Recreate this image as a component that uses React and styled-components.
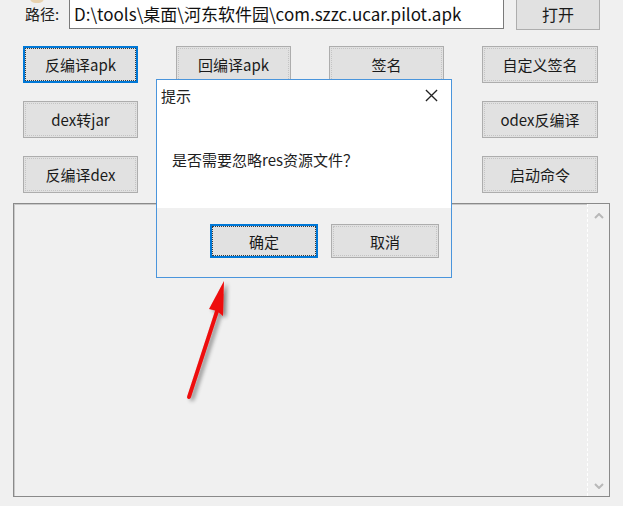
import React from 'react'
import styled, { createGlobalStyle } from 'styled-components'

const GlobalStyle = createGlobalStyle`
    html, body {
        margin: 0;
        padding: 0;
        background: #f0f0f0;
    }
    body {
        font-family: "Noto Sans CJK SC", "Noto Sans", sans-serif;
        color: #1a1a1a;
    }
`

const topButtons = [
    ['反编译apk', '回编译apk', '签名', '自定义签名'],
    ['dex转jar', '', '', 'odex反编译'],
    ['反编译dex', '', '', '启动命令'],
]

const App = () => {
    return (
        <Window>
            <GlobalStyle />
            <PathRow>
                <PathLabel>
                    <TinyIcon />
                    路径:
                </PathLabel>
                <PathInput>D:\tools\桌面\河东软件园\com.szzc.ucar.pilot.apk</PathInput>
                <OpenButton>打开</OpenButton>
            </PathRow>

            <ButtonGrid>
                {topButtons.flat().map((label, i) => (
                    label
                        ? <ToolButton key={i} $focused={i === 0}>{label}</ToolButton>
                        : <span key={i} />
                ))}
            </ButtonGrid>

            <LogBox>
                <ScrollBar>
                    <Chevron viewBox="0 0 10 6"><path d="M1 5 L5 1 L9 5" /></Chevron>
                    <Chevron viewBox="0 0 10 6"><path d="M1 1 L5 5 L9 1" /></Chevron>
                </ScrollBar>
            </LogBox>

            <Dialog>
                <DialogTitle>
                    <span>提示</span>
                    <CloseIcon viewBox="0 0 14 14"><path d="M1 1 L13 13 M13 1 L1 13" /></CloseIcon>
                </DialogTitle>
                <DialogBody>是否需要忽略res资源文件？</DialogBody>
                <DialogFooter>
                    <DialogButton $focused>确定</DialogButton>
                    <DialogButton>取消</DialogButton>
                </DialogFooter>
            </Dialog>

            <Arrow viewBox="0 0 80 140" width="80" height="140">
                <defs>
                    <filter id="arrowShadow" x="-50%" y="-20%" width="200%" height="140%">
                        <feGaussianBlur in="SourceAlpha" stdDeviation="2" />
                        <feOffset dx="3" dy="2" result="blur" />
                        <feComponentTransfer><feFuncA type="linear" slope="0.45" /></feComponentTransfer>
                        <feMerge>
                            <feMergeNode />
                            <feMergeNode in="SourceGraphic" />
                        </feMerge>
                    </filter>
                </defs>
                <g filter="url(#arrowShadow)">
                    <path d="M19 127 L48 38" stroke="#ee0b0b" strokeWidth="4" strokeLinecap="round" fill="none" />
                    <path d="M54 11 L39 39 L47 41 L53 46 Z" fill="#ee0b0b" />
                </g>
            </Arrow>
        </Window>
    )
}

const Window = styled.div`
    position: relative;
    width: 623px;
    height: 506px;
    overflow: hidden;
    background: #f0f0f0;
`

const PathRow = styled.div`
    display: flex;
    align-items: flex-start;
    margin-top: -2px;
    padding-left: 25px;
    height: 31px;
`

const PathLabel = styled.div`
    position: relative;
    width: 44px;
    line-height: 31px;
    font-size: 15px;
    color: #222;
`

const TinyIcon = styled.span`
    position: absolute;
    left: 5px;
    top: 0;
    width: 14px;
    height: 5px;
    border-radius: 0 0 6px 6px;
    background: #e8d2b0;
`

const PathInput = styled.div`
    box-sizing: border-box;
    width: 435px;
    height: 31px;
    padding: 0 4px;
    border: 1px solid #7a7a7a;
    background: #fff;
    font-size: 17px;
    line-height: 29px;
    white-space: nowrap;
    overflow: hidden;
    color: #111;
`

const baseButton = `
    box-sizing: border-box;
    display: flex;
    align-items: center;
    justify-content: center;
    background: #e1e1e1;
    font-family: inherit;
    color: #1a1a1a;
    padding: 0;
`

const OpenButton = styled.div`
    ${baseButton}
    margin-left: 12px;
    width: 84px;
    height: 32px;
    border: 1px solid #adadad;
    font-size: 16px;
`

const ButtonGrid = styled.div`
    display: grid;
    grid-template-columns: 115px 115px 115px 116px;
    grid-auto-rows: 37px;
    column-gap: 38px;
    row-gap: 18px;
    padding: 17px 0 0 23px;
`

const ToolButton = styled.div`
    ${baseButton}
    font-size: 15px;
    border: ${p => (p.$focused ? '2px solid #0078d7' : '1px solid #adadad')};
    outline: 1px dotted ${p => (p.$focused ? '#3a3a3a' : '#c4c4c4')};
    outline-offset: -3px;
`

const LogBox = styled.div`
    box-sizing: border-box;
    display: flex;
    justify-content: flex-end;
    margin: 10px 0 0 13px;
    width: 597px;
    height: 294px;
    border: 1px solid #8a8a8a;
    box-shadow: inset 1px 1px 0 #c9c9c9;
    background: #f0f0f0;
`

const ScrollBar = styled.div`
    display: flex;
    flex-direction: column;
    justify-content: space-between;
    align-items: center;
    width: 21px;
    padding: 9px 0 7px;
    border-left: 1px dashed #ffffff;
    background: #f0f0f0;
`

const Chevron = styled.svg`
    width: 10px;
    height: 6px;
    path {
        fill: none;
        stroke: #b8b8b8;
        stroke-width: 2;
    }
`

const Dialog = styled.div`
    position: absolute;
    left: 156px;
    top: 79px;
    box-sizing: border-box;
    width: 296px;
    height: 199px;
    display: flex;
    flex-direction: column;
    border: 1px solid #4a95dc;
    background: #fff;
`

const DialogTitle = styled.div`
    display: flex;
    align-items: center;
    justify-content: space-between;
    height: 31px;
    padding: 0 13px 0 4px;
    font-size: 15px;
    color: #222;
`

const CloseIcon = styled.svg`
    width: 13px;
    height: 13px;
    path {
        stroke: #222;
        stroke-width: 1.4;
    }
`

const DialogBody = styled.div`
    height: 97px;
    padding-left: 15px;
    display: flex;
    align-items: center;
    font-size: 15px;
    color: #1e1e1e;
`

const DialogFooter = styled.div`
    flex: 1;
    display: flex;
    justify-content: flex-end;
    align-items: flex-start;
    gap: 13px;
    padding: 16px 12px 0 0;
    background: #f0f0f0;
`

const DialogButton = styled.div`
    ${baseButton}
    width: 108px;
    height: 34px;
    font-size: 15px;
    border: ${p => (p.$focused ? '2px solid #0078d7' : '1px solid #adadad')};
    outline: 1px dotted ${p => (p.$focused ? '#3a3a3a' : '#c4c4c4')};
    outline-offset: -3px;
`

const Arrow = styled.svg`
    position: absolute;
    left: 170px;
    top: 270px;
    overflow: visible;
`

export default App
